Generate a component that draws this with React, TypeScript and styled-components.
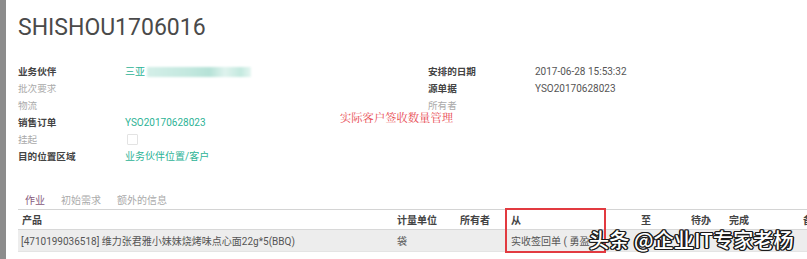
import React from "react";
import styled, { createGlobalStyle } from "styled-components";

const Global = createGlobalStyle`
  html, body { margin: 0; padding: 0; background: #fff; }
  body { width: 807px; height: 259px; overflow: hidden; font-family: Roboto, "Noto Sans CJK SC", sans-serif; }
`;

const Page = styled.div`
  display: flex;
  width: 807px;
  height: 259px;
  overflow: hidden;
  position: relative;
`;

const Strip = styled.div`
  width: 6px;
  flex: none;
  background: #8c8c8c;
`;

const Content = styled.div`
  flex: 1;
  padding: 14px 0 0 12px;
  overflow: hidden;
  font-size: 10px;
  color: #4c4c4c;
`;

const Title = styled.h1`
  margin: 0;
  font-family: Roboto, sans-serif;
  font-weight: 400;
  font-size: 23px;
  line-height: 28px;
  color: #4a4a4a;
`;

const Form = styled.div`
  margin-top: 21px;
  display: grid;
  grid-template-columns: 107px 303px 107px 1fr;
  grid-auto-rows: 17px;
  align-items: center;
`;

const Label = styled.div<{ $muted?: boolean }>`
  font-family: "Noto Sans CJK SC", sans-serif;
  font-size: 9.6px;
  line-height: 17px;
  font-weight: ${(p) => (p.$muted ? 400 : 700)};
  color: ${(p) => (p.$muted ? "#aaaaaa" : "#444444")};
  white-space: nowrap;
`;

const Value = styled.div<{ $link?: boolean }>`
  font-family: Roboto, "Noto Sans CJK SC", sans-serif;
  font-size: 10px;
  line-height: 17px;
  color: ${(p) => (p.$link ? "#2db396" : "#555555")};
  white-space: nowrap;
  display: flex;
  align-items: center;
`;

const Blurred = styled.span`
  display: inline-block;
  margin-left: 2px;
  width: 104px;
  height: 10px;
  background: linear-gradient(90deg, #d4efe8 0%, #c3e8df 40%, #b6e2d7 60%, #dff3ee 75%, #c4e9df 90%, #e6f6f2 100%);
  filter: blur(0.8px);
`;

const Check = styled.span`
  width: 9px;
  height: 9px;
  border: 1px solid #e3e3e3;
  border-radius: 1px;
  margin-left: 2px;
`;

const Note = styled.div`
  position: absolute;
  left: 340px;
  top: 109px;
  font-family: "Noto Serif CJK SC", "AR PL UMing CN", "Noto Sans CJK SC", serif;
  font-size: 11.3px;
  line-height: 16px;
  color: #e8464e;
  white-space: nowrap;
`;

const Tabs = styled.div`
  margin-top: 24px;
  height: 20px;
  border-bottom: 1px solid #d4d4d4;
  display: flex;
  align-items: center;
  padding-left: 7px;
  gap: 16px;
`;

const Tab = styled.span<{ $active?: boolean }>`
  font-family: "Noto Sans CJK SC", sans-serif;
  font-size: 10px;
  color: ${(p) => (p.$active ? "#875a7b" : "#aaaaaa")};
`;

const cols = "375px 63px 51px 130px 50px 38px 74px 60px";

const HeadRow = styled.div`
  display: grid;
  grid-template-columns: ${cols};
  height: 19px;
  align-items: center;
  border-bottom: 1px solid #d8d8d8;
  width: 841px;
`;

const HeadCell = styled.div`
  padding-left: 4px;
  font-family: "Noto Sans CJK SC", sans-serif;
  font-weight: 700;
  font-size: 10px;
  line-height: 14px;
  color: #444;
  white-space: nowrap;
`;

const DataRow = styled.div`
  display: grid;
  grid-template-columns: ${cols};
  height: 21px;
  align-items: center;
  background: #ededed;
  border-bottom: 1px solid #e4e4e4;
  width: 841px;
`;

const Cell = styled.div<{ $pad?: number }>`
  padding-left: ${(p) => p.$pad ?? 3}px;
  font-family: Roboto, "Noto Sans CJK SC", sans-serif;
  font-size: 10px;
  color: #555;
  white-space: nowrap;
  overflow: hidden;
`;

const RedBox = styled.div`
  position: absolute;
  left: 505px;
  top: 208px;
  width: 97px;
  height: 41px;
  border: 2px solid #e23a40;
`;

const Watermark = styled.div`
  position: absolute;
  left: 589px;
  top: 229px;
  font-family: "Noto Sans CJK SC", sans-serif;
  font-size: 20px;
  line-height: 21px;
  font-weight: 500;
  color: #fff;
  white-space: nowrap;
  letter-spacing: 0.2px;
  text-shadow:
    1px 0 0 #1a1a1a, -1px 0 0 #1a1a1a, 0 1px 0 #1a1a1a, 0 -1px 0 #1a1a1a,
    1px 1px 0 #1a1a1a, -1px -1px 0 #1a1a1a, 1px -1px 0 #1a1a1a, -1px 1px 0 #1a1a1a,
    1.5px 0 0 #1a1a1a, -1.5px 0 0 #1a1a1a;
`;

export default function App() {
  return (
    <Page>
      <Global />
      <Strip />
      <Content>
        <Title>SHISHOU1706016</Title>
        <Form>
          <Label>业务伙伴</Label>
          <Value $link>
            三亚<Blurred />
          </Value>
          <Label>安排的日期</Label>
          <Value>2017-06-28 15:53:32</Value>

          <Label $muted>批次要求</Label>
          <Value />
          <Label>源单据</Label>
          <Value>YSO20170628023</Value>

          <Label $muted>物流</Label>
          <Value />
          <Label $muted>所有者</Label>
          <Value />

          <Label>销售订单</Label>
          <Value $link>YSO20170628023</Value>
          <div />
          <div />

          <Label $muted>挂起</Label>
          <Value>
            <Check />
          </Value>
          <div />
          <div />

          <Label>目的位置区域</Label>
          <Value $link>业务伙伴位置/客户</Value>
          <div />
          <div />
        </Form>
        <Tabs>
          <Tab $active>作业</Tab>
          <Tab>初始需求</Tab>
          <Tab>额外的信息</Tab>
        </Tabs>
        <HeadRow>
          <HeadCell>产品</HeadCell>
          <HeadCell>计量单位</HeadCell>
          <HeadCell>所有者</HeadCell>
          <HeadCell>从</HeadCell>
          <HeadCell>至</HeadCell>
          <HeadCell>待办</HeadCell>
          <HeadCell>完成</HeadCell>
          <HeadCell>备</HeadCell>
        </HeadRow>
        <DataRow>
          <Cell>[4710199036518] 维力张君雅小妹妹烧烤味点心面22g*5(BBQ)</Cell>
          <Cell $pad={4}>袋</Cell>
          <Cell />
          <Cell $pad={4}>实收签回单 ( 勇盈</Cell>
          <Cell />
          <Cell />
          <Cell />
          <Cell />
        </DataRow>
      </Content>
      <Note>实际客户签收数量管理</Note>
      <RedBox />
      <Watermark>头条 @企业IT专家老杨</Watermark>
    </Page>
  );
}
